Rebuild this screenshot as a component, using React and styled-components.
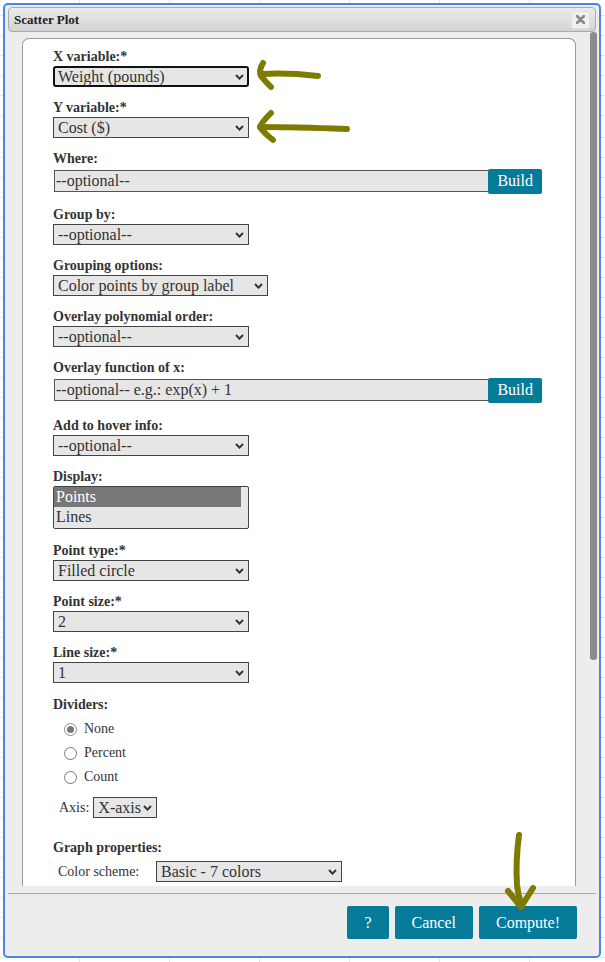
import React from "react";
import styled, { createGlobalStyle, css } from "styled-components";

const GlobalStyle = createGlobalStyle`
  html, body {
    margin: 0;
    padding: 0;
  }
  body {
    width: 605px;
    height: 962px;
    overflow: hidden;
    font-family: "Liberation Serif", "Times New Roman", serif;
    background-color: #fff;
    background-image:
      repeating-linear-gradient(to bottom, transparent 0 19px, #e2e4e8 19px 20px),
      repeating-linear-gradient(to right, transparent 0 89px, #e2e4e8 89px 90px);
    background-position: 0 118px, -10px 0;
  }
`;

const Page = styled.div`
  position: relative;
  box-sizing: border-box;
  width: 605px;
  height: 962px;
  padding: 3px 4px 4px 3px;
`;

const Dialog = styled.section`
  box-sizing: border-box;
  width: 598px;
  height: 955px;
  border: 2px solid #4a86e8;
  border-radius: 5px;
  background: #ededed;
  display: flex;
  flex-direction: column;
  overflow: hidden;
`;

const TitleBar = styled.header`
  box-sizing: border-box;
  height: 25px;
  margin: 2px 3px 0;
  padding: 0 5px;
  border: 1px solid #aaa;
  border-radius: 4px;
  background: linear-gradient(#ebebeb, #d4d4d4);
  display: flex;
  align-items: center;
  justify-content: space-between;
`;

const Title = styled.h1`
  margin: 0;
  font-size: 13px;
  font-weight: bold;
  color: #222;
`;

const CloseButton = styled.button`
  box-sizing: border-box;
  width: 19px;
  height: 18px;
  padding: 0;
  border: 1px solid #e2e2e2;
  border-radius: 3px;
  background: #f0f0f0;
  display: grid;
  place-items: center;
`;

const Body = styled.div`
  height: 854px;
  flex: none;
  display: flex;
  padding-left: 17px;
  overflow: hidden;
`;

const Panel = styled.div`
  flex: 1;
  margin-top: 6px;
  padding: 10px 33px 0 30px;
  border: 1px solid #9a9a9a;
  border-bottom: none;
  border-radius: 7px 7px 0 0;
  background: #fff;
  color: #333;
`;

const ScrollTrack = styled.div`
  width: 10px;
  margin-left: 13px;
  flex: none;
`;

const ScrollThumb = styled.div`
  width: 7px;
  height: 628px;
  margin-left: 1px;
  border-radius: 3px;
  background: #8c8c8c;
`;

const Footer = styled.footer`
  flex: 1;
  margin: 7px 3px 0;
  padding: 12px 19px 0;
  border-top: 1px solid #a8a8a8;
  display: flex;
  justify-content: flex-end;
  align-items: flex-start;
  gap: 6px;
`;

const ActionButton = styled.button`
  height: 33px;
  padding: 0 17px;
  border: none;
  border-radius: 2px;
  background: #067a99;
  color: #fff;
  font-family: "Liberation Serif", "Times New Roman", serif;
  font-size: 16px;
`;

const Field = styled.div`
  margin-bottom: ${(p) => p.$gap ?? 13}px;
`;

const FieldLabel = styled.div`
  font-size: 14px;
  font-weight: bold;
  line-height: 16px;
  color: #333;
  margin-bottom: 1px;
`;

const SelectBox = styled.div`
  box-sizing: border-box;
  width: ${(p) => p.$width}px;
  height: 21px;
  padding: 0 4px;
  border: 1px solid #444;
  background: #e6e6e6;
  display: flex;
  align-items: center;
  justify-content: space-between;
  font-size: 16px;
  line-height: 19px;
  color: #333;
  white-space: nowrap;
  ${(p) =>
    p.$focused &&
    css`
      border: 2px solid #111;
      border-radius: 3px;
      padding: 0 3px;
    `}
`;

const BuildRow = styled.div`
  display: flex;
  align-items: center;
  height: 26px;
`;

const TextInput = styled.input`
  box-sizing: border-box;
  flex: 1;
  min-width: 0;
  height: 22px;
  margin: 0 0 0 1px;
  padding: 0 0 0 1px;
  border: 1px solid #555;
  background: #e6e6e6;
  font-family: "Liberation Serif", "Times New Roman", serif;
  font-size: 16px;
  color: #333;
  outline: none;
`;

const BuildButton = styled.button`
  height: 25px;
  margin-left: -1px;
  padding: 0 9px;
  border: none;
  border-radius: 2px;
  background: #067a99;
  color: #fff;
  font-family: "Liberation Serif", "Times New Roman", serif;
  font-size: 16px;
`;

const ListBox = styled.div`
  box-sizing: border-box;
  width: 196px;
  height: 43px;
  border: 1px solid #444;
  border-radius: 2px;
  background: #e6e6e6;
`;

const ListOption = styled.div`
  height: 20px;
  margin-right: 7px;
  padding-left: 2px;
  font-size: 16px;
  line-height: 20px;
  color: #333;
  ${(p) =>
    p.$selected &&
    css`
      background: #777;
      color: #fff;
    `}
`;

const RadioGroup = styled.div`
  margin-top: 4px;
  padding-left: 11px;
`;

const RadioRow = styled.label`
  display: flex;
  align-items: center;
  gap: 7px;
  height: 24px;
  font-size: 14px;
  color: #333;
`;

const RadioMark = styled.span`
  box-sizing: border-box;
  width: 13px;
  height: 13px;
  border-radius: 50%;
  border: 1px solid ${(p) => (p.$checked ? "#8a8a8a" : "#767676")};
  background: #fff;
  display: grid;
  place-items: center;
  &::after {
    content: "";
    width: 7px;
    height: 7px;
    border-radius: 50%;
    background: ${(p) => (p.$checked ? "#767676" : "transparent")};
  }
`;

const InlineRow = styled.div`
  display: flex;
  align-items: center;
  gap: 4px;
  margin-top: ${(p) => p.$top}px;
  padding-left: ${(p) => p.$indent}px;
`;

const InlineLabel = styled.span`
  font-size: 14px;
  color: #333;
  ${(p) =>
    p.$width &&
    css`
      width: ${p.$width}px;
    `}
`;

const Annotations = styled.svg`
  position: absolute;
  top: 0;
  left: 0;
  pointer-events: none;
`;

const Chevron = () => (
  <svg width="9" height="6" viewBox="0 0 9 6">
    <path d="M1 1 L4.5 4.6 L8 1" fill="none" stroke="#333" strokeWidth="2" />
  </svg>
);

const Select = ({ value, width = 196, focused }) => (
  <SelectBox role="combobox" $width={width} $focused={focused}>
    <span>{value}</span>
    <Chevron />
  </SelectBox>
);

const SelectField = ({ label, value, width, focused }) => (
  <Field>
    <FieldLabel>{label}</FieldLabel>
    <Select value={value} width={width} focused={focused} />
  </Field>
);

const BuildField = ({ label, value, gap }) => (
  <Field $gap={gap}>
    <FieldLabel>{label}</FieldLabel>
    <BuildRow>
      <TextInput readOnly value={value} />
      <BuildButton>Build</BuildButton>
    </BuildRow>
  </Field>
);

const dividers = [
  { name: "None", checked: true },
  { name: "Percent", checked: false },
  { name: "Count", checked: false },
];

export default function App() {
  return (
    <>
      <GlobalStyle />
      <Page>
        <Dialog>
          <TitleBar>
            <Title>Scatter Plot</Title>
            <CloseButton aria-label="close">
              <svg width="9" height="9" viewBox="0 0 9 9">
                <path
                  d="M1 1 L8 8 M8 1 L1 8"
                  stroke="#8a8a8a"
                  strokeWidth="2.6"
                  strokeLinecap="round"
                />
              </svg>
            </CloseButton>
          </TitleBar>

          <Body>
            <Panel>
              <SelectField label="X variable:*" value="Weight (pounds)" focused />
              <SelectField label="Y variable:*" value="Cost ($)" />
              <BuildField label="Where:" value="--optional--" />
              <SelectField label="Group by:" value="--optional--" />
              <SelectField
                label="Grouping options:"
                value="Color points by group label"
                width={215}
              />
              <SelectField label="Overlay polynomial order:" value="--optional--" />
              <BuildField
                label="Overlay function of x:"
                value="--optional-- e.g.: exp(x) + 1"
                gap={15}
              />
              <SelectField label="Add to hover info:" value="--optional--" />
              <Field $gap={14}>
                <FieldLabel>Display:</FieldLabel>
                <ListBox role="listbox">
                  <ListOption $selected>Points</ListOption>
                  <ListOption>Lines</ListOption>
                </ListBox>
              </Field>
              <SelectField label="Point type:*" value="Filled circle" />
              <SelectField label="Point size:*" value="2" />
              <Field $gap={14}>
                <FieldLabel>Line size:*</FieldLabel>
                <Select value="1" />
              </Field>
              <Field $gap={22}>
                <FieldLabel>Dividers:</FieldLabel>
                <RadioGroup>
                  {dividers.map((d) => (
                    <RadioRow key={d.name}>
                      <RadioMark $checked={d.checked} />
                      {d.name}
                    </RadioRow>
                  ))}
                </RadioGroup>
                <InlineRow $top={8} $indent={6}>
                  <InlineLabel>Axis:</InlineLabel>
                  <Select value="X-axis" width={64} />
                </InlineRow>
              </Field>
              <Field>
                <FieldLabel>Graph properties:</FieldLabel>
                <InlineRow $top={5} $indent={5}>
                  <InlineLabel $width={94}>Color scheme:</InlineLabel>
                  <Select value="Basic - 7 colors" width={186} />
                </InlineRow>
              </Field>
            </Panel>
            <ScrollTrack>
              <ScrollThumb />
            </ScrollTrack>
          </Body>

          <Footer>
            <ActionButton>?</ActionButton>
            <ActionButton>Cancel</ActionButton>
            <ActionButton>Compute!</ActionButton>
          </Footer>
        </Dialog>

        <Annotations width="605" height="962" viewBox="0 0 605 962">
          <g
            fill="none"
            stroke="#7d7c00"
            strokeWidth="6"
            strokeLinecap="round"
            strokeLinejoin="round"
          >
            <path d="M318 76 C 300 74, 282 73, 263 74" />
            <path d="M263 63 C 260 68, 259 72, 261 76 C 264 80, 268 84, 271 87" />
            <path d="M347 129 C 320 128, 290 127, 260 127" />
            <path d="M271 113 C 266 118, 261 123, 260 127 C 263 132, 268 136, 273 140" />
            <path d="M519 835 C 517 850, 516 870, 517 885 C 518 895, 520 900, 522 906" />
            <path d="M508 891 L 521 907 L 533 888" />
          </g>
        </Annotations>
      </Page>
    </>
  );
}
